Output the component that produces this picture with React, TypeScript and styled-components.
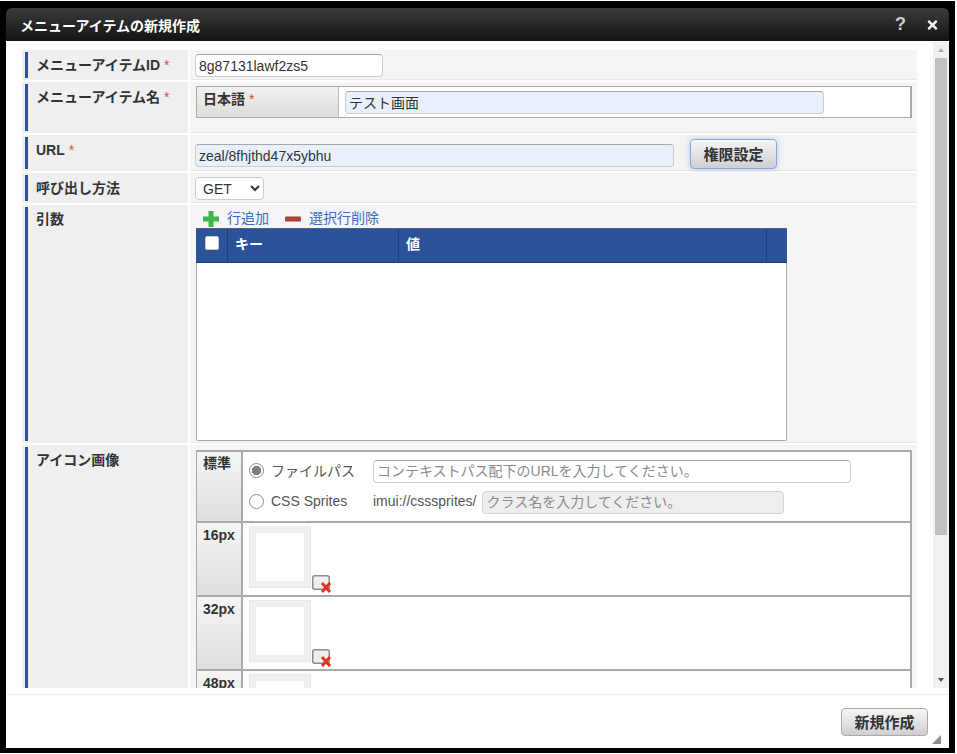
import styled, { createGlobalStyle } from 'styled-components'
import { FaTimes } from 'react-icons/fa'

const GlobalStyle = createGlobalStyle`
  html, body {
    margin: 0;
    padding: 0;
    background: #fff;
    overflow: hidden;
  }
  body, input, select, button {
    font-family: "Liberation Sans", "Noto Sans CJK JP", sans-serif;
    font-size: 14px;
  }
`

const Frame = styled.div`
  box-sizing: border-box;
  width: 955px;
  height: 752px;
  margin-top: 1px;
  border-style: solid;
  border-color: #000;
  border-width: 7px 6px 5px;
  background: #000;
  display: flex;
  flex-direction: column;
`

const TitleBar = styled.header`
  box-sizing: border-box;
  height: 33px;
  flex: none;
  padding: 0 10px 0 14px;
  display: flex;
  align-items: center;
  border-radius: 6px 6px 0 0;
  background: linear-gradient(#3b3b3b, #141414);
  color: #fff;
`

const Title = styled.h1`
  margin: 0;
  flex: 1;
  font-size: 14px;
  font-weight: bold;
`

const HelpGlyph = styled.span`
  font-size: 18px;
  font-weight: bold;
  color: #ccc;
  margin-right: 20px;
`

const CloseGlyph = styled(FaTimes)`
  width: 13px;
  height: 14px;
  color: #f2f2f2;
`

const Content = styled.div`
  flex: 1;
  background: #fff;
  display: flex;
  flex-direction: column;
  min-height: 0;
`

const Main = styled.div`
  height: 647px;
  flex: none;
  display: flex;
  overflow: hidden;
`

const Form = styled.div`
  width: 927px;
  box-sizing: border-box;
  padding: 9px 16px 0;
  display: flex;
  flex-direction: column;
  gap: 2px;
  overflow: hidden;
`

const Row = styled.div<{ $height: number }>`
  flex: none;
  height: ${({ $height }) => $height}px;
  display: grid;
  grid-template-columns: 166px 727px;
  column-gap: 2px;
`

const Label = styled.div<{ $top?: number }>`
  position: relative;
  box-sizing: border-box;
  padding: ${({ $top }) => $top ?? 5}px 0 0 14px;
  background: #efefef;
  font-weight: bold;
  line-height: 20px;
  color: #333;

  &::before {
    content: '';
    position: absolute;
    left: 3px;
    top: 2px;
    bottom: 2px;
    width: 3px;
    background: #2c5299;
  }
`

const Required = styled.span`
  margin-left: 4px;
  color: #e2452b;
  font-weight: normal;
`

const Value = styled.div<{ $top?: number }>`
  box-sizing: border-box;
  padding: ${({ $top }) => $top ?? 4}px 6px 0 5px;
  background: #f5f5f5;
  border-bottom: 1px solid #e8e8e8;
`

const TextInput = styled.input<{ $width: number; $filled?: boolean; $cjk?: boolean }>`
  box-sizing: border-box;
  display: block;
  width: ${({ $width }) => $width}px;
  height: 23px;
  padding: 0 3px ${({ $cjk }) => ($cjk ? 2 : 0)}px;
  border: 1px solid #ccc;
  border-top-color: #a8a8a8;
  border-radius: 4px;
  background: ${({ $filled }) => ($filled ? '#e8f0fe' : '#fff')};
  color: #333;
  outline: none;

  &::placeholder {
    color: #8a8a8a;
    opacity: 1;
  }

  &:disabled {
    background: #eee;
    border-color: #d4d4d4;
  }
`

const NameTable = styled.div`
  box-sizing: border-box;
  width: 716px;
  height: 32px;
  margin-left: 1px;
  display: flex;
  background: #fff;
  border: 1px solid #aaa;
  border-width: 1px 2px 1px 1px;
`

const NameHead = styled.div`
  box-sizing: border-box;
  width: 142px;
  padding: 3px 0 0 6px;
  background: linear-gradient(#f2f2f2, #dcdcdc);
  font-weight: bold;
  line-height: 18px;
  color: #333;
  border-right: 1px solid #bbb;
`

const NameCell = styled.div`
  padding: 4px 0 0 6px;
`

const UrlLine = styled.div`
  display: flex;
  align-items: flex-end;
  gap: 16px;

  input {
    margin-bottom: 2px;
  }
`

const Button = styled.button<{ $focused?: boolean }>`
  box-sizing: border-box;
  width: 87px;
  height: ${({ $focused }) => ($focused ? 30 : 28)}px;
  padding: 0 0 1px;
  border: 1px solid ${({ $focused }) => ($focused ? '#7fa8e0' : '#aaa')};
  border-radius: 4px;
  background: linear-gradient(#f6f6f6, #cfcfcf);
  font-size: 15px;
  font-weight: bold;
  color: #333;
  box-shadow: ${({ $focused }) => ($focused ? '0 0 6px rgba(110, 155, 225, 0.5)' : 'none')};
`

const Select = styled.select`
  box-sizing: border-box;
  display: block;
  width: 69px;
  height: 23px;
  padding: 0 0 0 3px;
  border: 1px solid #ccc;
  border-radius: 4px;
  background-color: #fff;
  color: #333;
`

const Toolbar = styled.div`
  height: 20px;
  margin-left: 7px;
  display: flex;
  align-items: center;
  line-height: 17px;

  svg {
    margin-top: 2px;
  }
`

const ToolLink = styled.a`
  display: flex;
  align-items: center;
  gap: 7px;
  margin-right: 15px;
  color: #3a6fc4;
`

const ArgsTable = styled.div`
  box-sizing: border-box;
  width: 591px;
  height: 213px;
  margin-left: 1px;
  background: #fff;
  border: 1px solid #aaa;
  border-top: 0;
  border-radius: 2px;
`

const ArgsHead = styled.div`
  box-sizing: border-box;
  margin: 0 -1px;
  height: 35px;
  display: grid;
  grid-template-columns: 31px 171px 368px 1fr;
  background: #2c5299;
  border-top: 1px solid #555f75;
  border-bottom: 1px solid #1b3a78;
  color: #fff;
  font-weight: bold;
`

const ArgsCell = styled.div`
  padding: 6px 0 0 7px;
  line-height: 18px;
  border-left: 1px solid #1f3f7d;

  &:first-child {
    border-left: 0;
    padding: 7px 0 0 9px;
  }
`

const HeadCheck = styled.input.attrs({ type: 'checkbox' })`
  appearance: none;
  display: block;
  margin: 0;
  width: 14px;
  height: 14px;
  border-radius: 2px;
  background: #fff;
  border: 1px solid #c8c8c8;
  box-sizing: border-box;
`

const IconTable = styled.div`
  box-sizing: border-box;
  width: 716px;
  margin-left: 1px;
  background: #fff;
  border: 2px solid #aaa;
  border-left-width: 1px;
  border-bottom: 0;
`

const IconRow = styled.div<{ $height: number }>`
  box-sizing: border-box;
  height: ${({ $height }) => $height}px;
  display: flex;
  border-bottom: 2px solid #aaa;
`

const IconHead = styled.div<{ $top?: number }>`
  box-sizing: border-box;
  width: 46px;
  flex: none;
  padding: ${({ $top }) => $top ?? 3}px 0 0 6px;
  background: linear-gradient(#f5f5f5, #dedede);
  border-right: 2px solid #aaa;
  font-weight: bold;
  line-height: 18px;
  color: #333;
`

const SourceCell = styled.div`
  flex: 1;
  padding: 8px 0 0 6px;
  display: grid;
  grid-template-columns: 124px auto;
  grid-auto-rows: 23px;
  row-gap: 8px;
  align-items: center;
  justify-content: start;
  color: #555;
`

const RadioLabel = styled.label`
  display: flex;
  align-items: center;
  gap: 7px;
  margin-bottom: 3px;
`

const Radio = styled.input.attrs({ type: 'radio' })`
  appearance: none;
  box-sizing: border-box;
  margin: 0;
  width: 15px;
  height: 15px;
  border: 1.5px solid #8c8c8c;
  border-radius: 50%;
  background: #fff;

  &:checked {
    background: radial-gradient(circle, #808080 0 4.5px, #fff 5px);
  }
`

const SpriteLine = styled.div`
  display: flex;
  align-items: center;
  gap: 6px;
`

const SpritePrefix = styled.span`
  margin-bottom: 3px;
`

const ImageCell = styled.div`
  flex: 1;
  padding: 3px 0 0 6px;
  display: flex;
  align-items: flex-start;
`

const ImageBox = styled.div`
  box-sizing: border-box;
  width: 62px;
  height: 62px;
  background: #fff;
  border: 7px solid #f0f0f0;
  outline: 1px solid #e8e8e8;
  outline-offset: -1px;
`

const RemoveIcon = styled.svg`
  width: 20px;
  height: 18px;
  margin: 49px 0 0 1px;
`

const Footer = styled.footer`
  position: relative;
  box-sizing: border-box;
  flex: none;
  height: 54px;
  margin-top: 6px;
  padding: 13px 21px 0 0;
  display: flex;
  justify-content: flex-end;
  align-items: flex-start;
  border-top: 1px solid #ececec;
`

const ResizeGrip = styled.svg`
  position: absolute;
  right: 8px;
  bottom: 4px;
  width: 9px;
  height: 9px;
`

const Scrollbar = styled.div`
  position: relative;
  width: 16px;
  flex: none;
  margin-top: 1px;
  background: #f1f1f1;
`

const ScrollThumb = styled.div`
  position: absolute;
  left: 2px;
  right: 2px;
  top: 16px;
  height: 477px;
  background: #c1c1c1;
`

const ScrollArrow = styled.span<{ $down?: boolean }>`
  position: absolute;
  left: 5px;
  ${({ $down }) => ($down ? 'bottom: 6px;' : 'top: 6px;')}
  border-left: 3.5px solid transparent;
  border-right: 3.5px solid transparent;
  ${({ $down }) => ($down ? 'border-top: 4px solid #505050;' : 'border-bottom: 4px solid #a8a8a8;')}
`

const AddIcon = () => (
  <svg width="18" height="18" viewBox="0 0 18 18">
    <path d="M6.5 1h5v5.5H17v5h-5.5V17h-5v-5.5H1v-5h5.5z" fill="#3cb54a" />
  </svg>
)

const DeleteRowIcon = () => (
  <svg width="18" height="18" viewBox="0 0 18 18">
    <rect x="1" y="6.5" width="16" height="5" rx="1" fill="#8f4a3e" />
    <rect x="2" y="8" width="14" height="2" fill="#d9391f" />
  </svg>
)

const Remove = () => (
  <RemoveIcon viewBox="0 0 20 18">
    <rect x="0.75" y="0.75" width="16.5" height="13.5" rx="2" fill="#efefef" stroke="#8c8c8c" strokeWidth="1.5" />
    <path d="M10 8l8 9M18 8l-8 9" stroke="#e2341d" strokeWidth="3" />
  </RemoveIcon>
)

const App = () => (
  <>
    <GlobalStyle />
    <Frame>
      <TitleBar>
        <Title>メニューアイテムの新規作成</Title>
        <HelpGlyph>?</HelpGlyph>
        <CloseGlyph />
      </TitleBar>
      <Content>
        <Main>
          <Form>
            <Row $height={30}>
              <Label>
                メニューアイテムID<Required>*</Required>
              </Label>
              <Value>
                <TextInput $width={188} defaultValue="8g87131lawf2zs5" />
              </Value>
            </Row>
            <Row $height={51}>
              <Label>
                メニューアイテム名<Required>*</Required>
              </Label>
              <Value>
                <NameTable>
                  <NameHead>
                    日本語<Required>*</Required>
                  </NameHead>
                  <NameCell>
                    <TextInput $width={479} $filled $cjk defaultValue="テスト画面" />
                  </NameCell>
                </NameTable>
              </Value>
            </Row>
            <Row $height={36}>
              <Label>
                URL<Required>*</Required>
              </Label>
              <Value>
                <UrlLine>
                  <TextInput $width={479} $filled defaultValue="zeal/8fhjthd47x5ybhu" />
                  <Button $focused>権限設定</Button>
                </UrlLine>
              </Value>
            </Row>
            <Row $height={30}>
              <Label>呼び出し方法</Label>
              <Value>
                <Select defaultValue="GET">
                  <option>GET</option>
                  <option>POST</option>
                </Select>
              </Value>
            </Row>
            <Row $height={238}>
              <Label $top={4}>引数</Label>
              <Value $top={3}>
                <Toolbar>
                  <ToolLink>
                    <AddIcon />
                    行追加
                  </ToolLink>
                  <ToolLink>
                    <DeleteRowIcon />
                    選択行削除
                  </ToolLink>
                </Toolbar>
                <ArgsTable>
                  <ArgsHead>
                    <ArgsCell>
                      <HeadCheck />
                    </ArgsCell>
                    <ArgsCell>キー</ArgsCell>
                    <ArgsCell>値</ArgsCell>
                    <ArgsCell />
                  </ArgsHead>
                </ArgsTable>
              </Value>
            </Row>
            <Row $height={300}>
              <Label>アイコン画像</Label>
              <Value $top={5}>
                <IconTable>
                  <IconRow $height={71}>
                    <IconHead $top={2}>標準</IconHead>
                    <SourceCell>
                      <RadioLabel>
                        <Radio name="source" defaultChecked />
                        ファイルパス
                      </RadioLabel>
                      <TextInput $width={478} $cjk placeholder="コンテキストパス配下のURLを入力してください。" />
                      <RadioLabel>
                        <Radio name="source" />
                        CSS Sprites
                      </RadioLabel>
                      <SpriteLine>
                        <SpritePrefix>imui://csssprites/</SpritePrefix>
                        <TextInput $width={302} $cjk disabled placeholder="クラス名を入力してください。" />
                      </SpriteLine>
                    </SourceCell>
                  </IconRow>
                  {['16px', '32px', '48px'].map((size) => (
                    <IconRow key={size} $height={74}>
                      <IconHead>{size}</IconHead>
                      <ImageCell>
                        <ImageBox />
                        <Remove />
                      </ImageCell>
                    </IconRow>
                  ))}
                </IconTable>
              </Value>
            </Row>
          </Form>
          <Scrollbar>
            <ScrollArrow />
            <ScrollThumb />
            <ScrollArrow $down />
          </Scrollbar>
        </Main>
        <Footer>
          <Button>新規作成</Button>
          <ResizeGrip viewBox="0 0 9 9">
            <path d="M9 0v9H0z" fill="#8f8f8f" />
          </ResizeGrip>
        </Footer>
      </Content>
    </Frame>
  </>
)

export default App
